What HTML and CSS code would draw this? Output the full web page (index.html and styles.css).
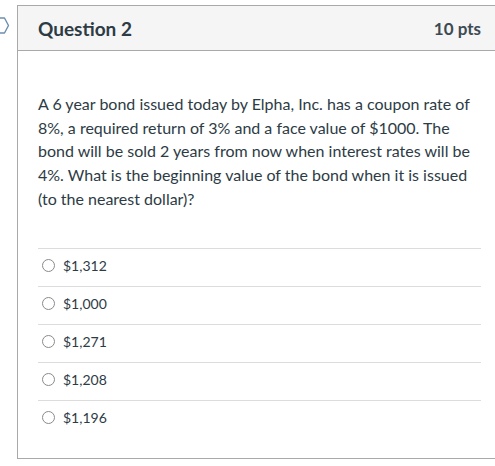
FILE: index.html
```html
<!DOCTYPE html>
<html lang="en">
<head>
<meta charset="utf-8">
<title>Question 2</title>
<link rel="stylesheet" href="styles.css">
</head>
<body>
<div class="page">
  <svg class="flag" width="10" height="18" viewBox="0 0 10 18" aria-hidden="true">
    <polyline points="0,1 4.5,1 8.5,8.5 4.5,16 0,16" fill="none" stroke="#6b8fae" stroke-width="1.4" stroke-linejoin="round"/>
  </svg>
  <div class="card">
    <div class="card-header">
      <span class="q-title">Question 2</span>
      <span class="q-points">10 pts</span>
    </div>
    <div class="card-body">
      <p class="q-text">A 6 year bond issued today by Elpha, Inc. has a coupon rate of 8%, a required return of 3% and a face value of $1000. The bond will be sold 2 years from now when interest rates will be 4%. What is the beginning value of the bond when it is issued (to the nearest dollar)?</p>
      <div class="answers">
        <label class="answer"><span class="radio"></span><span class="answer-text">$1,312</span></label>
        <label class="answer"><span class="radio"></span><span class="answer-text">$1,000</span></label>
        <label class="answer"><span class="radio"></span><span class="answer-text">$1,271</span></label>
        <label class="answer"><span class="radio"></span><span class="answer-text">$1,208</span></label>
        <label class="answer"><span class="radio"></span><span class="answer-text">$1,196</span></label>
      </div>
    </div>
  </div>
</div>
</body>
</html>
```
FILE: styles.css
```css
html, body {
  margin: 0;
  padding: 0;
  overflow: hidden;
  background: #ffffff;
}
body {
  font-family: Lato, "Noto Sans", sans-serif;
  color: #2d3b45;
}
.page {
  position: relative;
  padding-top: 5px;
  padding-left: 17px;
}
.flag {
  position: absolute;
  left: 0;
  top: 17px;
}
.card {
  width: 485px;
  box-sizing: border-box;
  border: 1px solid #a9a9a9;
  background: #fff;
}
.card-header {
  display: flex;
  justify-content: space-between;
  align-items: center;
  height: 44px;
  padding: 0 20px;
  background: #f5f5f5;
  border-bottom: 1px solid #a9a9a9;
}
.q-title {
  font-size: 19px;
  font-weight: 700;
}
.q-points {
  font-size: 17px;
  font-weight: 700;
  color: #3d4a53;
}
.card-body {
  padding: 41px 20px 20px;
}
.q-text {
  margin: 0;
  font-size: 16px;
  line-height: 23.7px;
}
.answers {
  margin-top: 37px;
}
.answer {
  display: flex;
  align-items: flex-start;
  height: 29px;
  padding-top: 8px;
  border-top: 1px solid #dcdcdc;
}
.radio {
  flex: none;
  width: 11px;
  height: 11px;
  border: 1px solid #8a8a8a;
  border-radius: 50%;
  margin: 2px 8px 0 4px;
  background: #fff;
}
.answer-text {
  font-size: 14px;
  line-height: 17px;
}
```
